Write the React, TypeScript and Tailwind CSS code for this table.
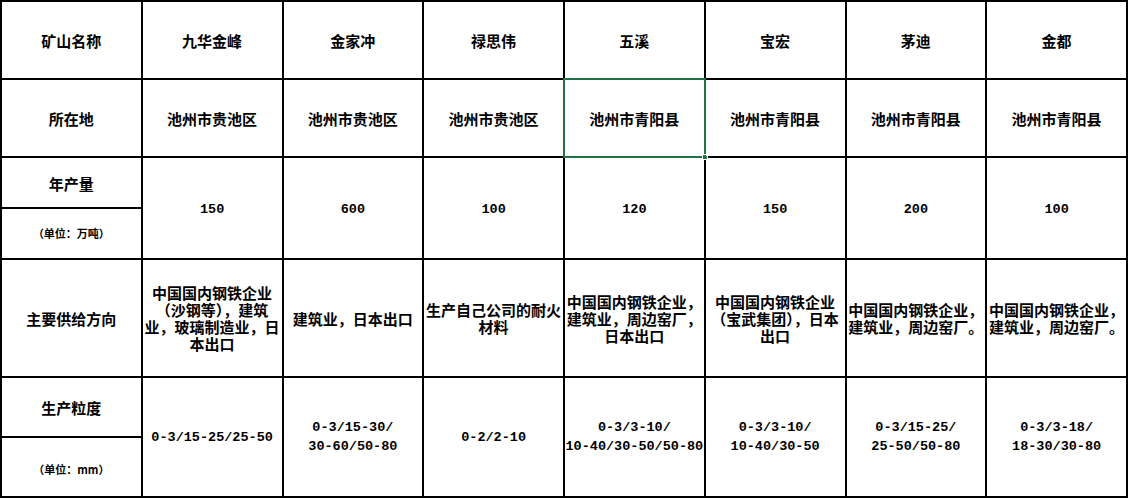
import React from "react";

const MINES = [
  {
    name: "九华金峰",
    place: "池州市贵池区",
    output: "150",
    supply: ["中国国内钢铁企业", "（沙钢等），建筑", "业，玻璃制造业，日", "本出口"],
    size: ["0-3/15-25/25-50"],
  },
  {
    name: "金家冲",
    place: "池州市贵池区",
    output: "600",
    supply: ["建筑业，日本出口"],
    size: ["0-3/15-30/", "30-60/50-80"],
  },
  {
    name: "禄思伟",
    place: "池州市贵池区",
    output: "100",
    supply: ["生产自己公司的耐火", "材料"],
    size: ["0-2/2-10"],
  },
  {
    name: "五溪",
    place: "池州市青阳县",
    output: "120",
    supply: ["中国国内钢铁企业，", "建筑业，周边窑厂，", "日本出口"],
    size: ["0-3/3-10/", "10-40/30-50/50-80"],
  },
  {
    name: "宝宏",
    place: "池州市青阳县",
    output: "150",
    supply: ["中国国内钢铁企业", "（宝武集团），日本", "出口"],
    size: ["0-3/3-10/", "10-40/30-50"],
  },
  {
    name: "茅迪",
    place: "池州市青阳县",
    output: "200",
    supply: ["中国国内钢铁企业，", "建筑业，周边窑厂。"],
    size: ["0-3/15-25/", "25-50/50-80"],
  },
  {
    name: "金都",
    place: "池州市青阳县",
    output: "100",
    supply: ["中国国内钢铁企业，", "建筑业，周边窑厂。"],
    size: ["0-3/3-18/", "18-30/30-80"],
  },
];

const cell = "bg-white flex flex-col items-center justify-center text-center";
const cjk =
  "font-['Noto_Sans_CJK_SC',sans-serif] font-bold text-[15px] leading-[17px] text-black whitespace-nowrap";
const num =
  "font-['Liberation_Mono',monospace] font-semibold text-[13.5px] leading-[19px] text-black whitespace-nowrap";
const unit =
  "font-['Noto_Sans_CJK_SC',sans-serif] font-bold text-[11px] leading-[13px] text-black whitespace-nowrap";

export default function App() {
  return (
    <div className="w-[1129px] h-[500px] bg-white">
      <div className="w-[1128px] h-[498px] bg-black p-[2px] grid grid-cols-8 grid-rows-[76px_76px_49px_49px_116px_58px_58px] gap-[2px]">
        {/* row 1 */}
        <div className={cell}>
          <span className={cjk}>矿山名称</span>
        </div>
        {MINES.map((m) => (
          <div key={m.name} className={cell}>
            <span className={cjk}>{m.name}</span>
          </div>
        ))}

        {/* row 2 */}
        <div className={cell}>
          <span className={cjk}>所在地</span>
        </div>
        {MINES.map((m, i) => (
          <div key={m.name} className={`${cell} relative`}>
            <span className={cjk}>{m.place}</span>
            {i === 3 && (
              <>
                <div className="absolute -inset-[2px] border-2 border-[#217346]" />
                <div className="absolute -right-[4px] -bottom-[4px] w-[6px] h-[6px] bg-[#217346] border border-white" />
              </>
            )}
          </div>
        ))}

        {/* row 3-4 */}
        <div className={`${cell} pt-[2px]`}>
          <span className={cjk}>年产量</span>
        </div>
        {MINES.map((m) => (
          <div key={m.name} className={`${cell} row-span-2 pt-[2px]`}>
            <span className={num}>{m.output}</span>
          </div>
        ))}
        <div className={cell}>
          <span className={unit}>（单位：万吨）</span>
        </div>

        {/* row 5 */}
        <div className={cell}>
          <span className={cjk}>主要供给方向</span>
        </div>
        {MINES.map((m) => (
          <div key={m.name} className={cell}>
            {m.supply.map((line) => (
              <span key={line} className={cjk}>
                {line}
              </span>
            ))}
          </div>
        ))}

        {/* row 6-7 */}
        <div className={cell}>
          <span className={cjk}>生产粒度</span>
        </div>
        {MINES.map((m) => (
          <div key={m.name} className={`${cell} row-span-2`}>
            {m.size.map((line) => (
              <span key={line} className={num}>
                {line}
              </span>
            ))}
          </div>
        ))}
        <div className={`${cell} pt-[4px]`}>
          <span className={unit}>（单位：mm）</span>
        </div>
      </div>
    </div>
  );
}
